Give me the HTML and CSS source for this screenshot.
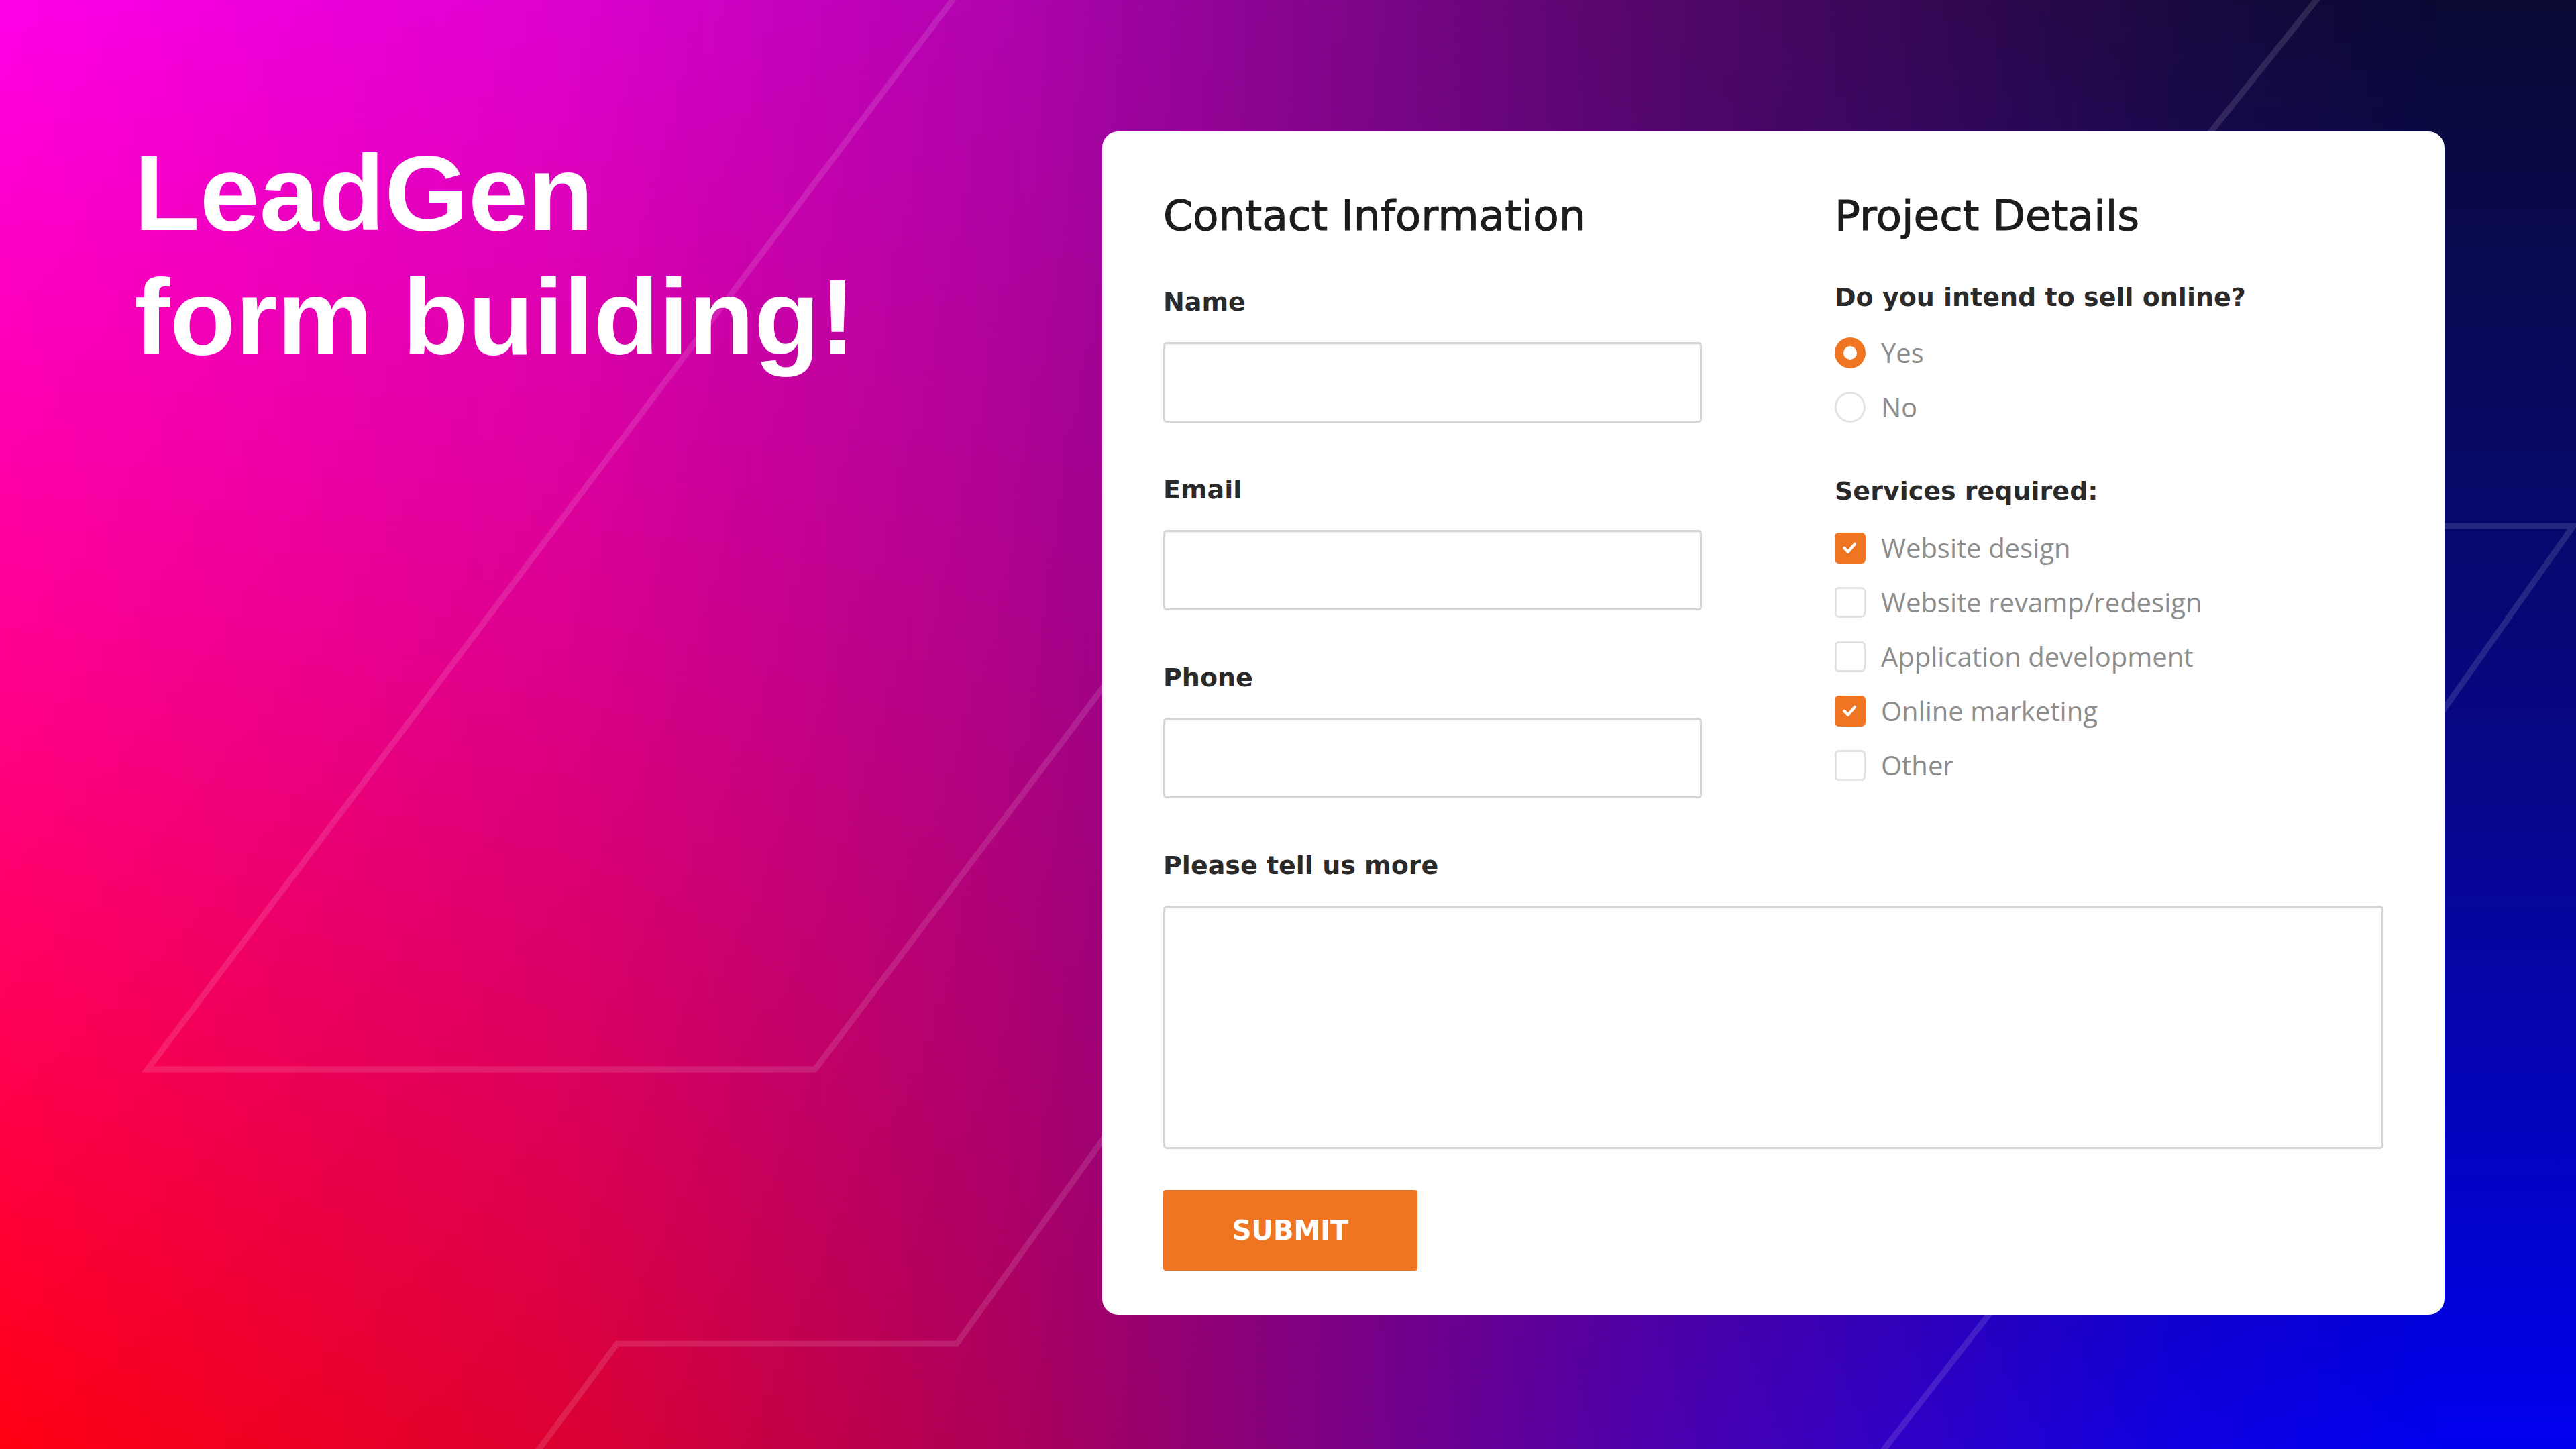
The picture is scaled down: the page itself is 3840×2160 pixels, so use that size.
FILE: index.html
```html
<!DOCTYPE html>
<html lang="en">
<head>
<meta charset="utf-8">
<title>LeadGen form building</title>
<link rel="stylesheet" href="styles.css">
</head>
<body>
<div class="page">
  <svg class="bg-lines" width="3840" height="2160" viewBox="0 0 3840 2160" aria-hidden="true">
    <polyline points="1450,-40 220,1594 1215,1594 1900,686"/>
    <polyline points="3485,-40 3197,320"/>
    <polyline points="3500,784 3836,784 3500,1260"/>
    <polyline points="780,2192 920,2003 1426,2003 1800,1481"/>
    <polyline points="2784,2192 2962,1963 3010,1900"/>
  </svg>

  <h1 class="hero">LeadGen<br>form building!</h1>

  <form class="card">
    <div class="cols">
      <div class="col">
        <h2 class="heading">Contact Information</h2>
        <div class="field">
          <label class="label" for="f-name">Name</label>
          <input class="input" id="f-name" type="text">
        </div>
        <div class="field">
          <label class="label" for="f-email">Email</label>
          <input class="input" id="f-email" type="text">
        </div>
        <div class="field">
          <label class="label" for="f-phone">Phone</label>
          <input class="input" id="f-phone" type="text">
        </div>
      </div>

      <div class="col">
        <h2 class="heading">Project Details</h2>
        <div class="group group-radio">
          <div class="label">Do you intend to sell online?</div>
          <ul class="options">
            <li class="option"><span class="radio on"></span>Yes</li>
            <li class="option"><span class="radio"></span>No</li>
          </ul>
        </div>
        <div class="group group-check">
          <div class="label">Services required:</div>
          <ul class="options">
            <li class="option"><span class="check on"><svg viewBox="0 0 46 46" width="40" height="40"><polyline points="13,23 19.5,29.5 31,16"/></svg></span>Website design</li>
            <li class="option"><span class="check"></span>Website revamp/redesign</li>
            <li class="option"><span class="check"></span>Application development</li>
            <li class="option"><span class="check on"><svg viewBox="0 0 46 46" width="40" height="40"><polyline points="13,23 19.5,29.5 31,16"/></svg></span>Online marketing</li>
            <li class="option"><span class="check"></span>Other</li>
          </ul>
        </div>
      </div>
    </div>

    <div class="field more">
      <label class="label" for="f-more">Please tell us more</label>
      <textarea class="input textarea" id="f-more"></textarea>
    </div>

    <button class="submit" type="button">SUBMIT</button>
  </form>
</div>
</body>
</html>
```

FILE: styles.css
```css
html, body {
  margin: 0;
  padding: 0;
}

body {
  width: 3840px;
  height: 2160px;
  overflow: hidden;
}

.page {
  position: relative;
  width: 3840px;
  height: 2160px;
  box-sizing: border-box;
  display: flex;
  align-items: flex-start;
  padding: 196px 0 0 200px;
  background: linear-gradient(to bottom, #0a0a34 0%, #06078a 55%, #0000f0 100%);
  overflow: hidden;
}

.page::before {
  content: "";
  position: absolute;
  inset: 0;
  background: linear-gradient(to bottom, #ff00e8 0%, #ff0090 45%, #ff0012 100%);
  -webkit-mask-image: linear-gradient(to right, #000 0%, rgba(0,0,0,0.86) 22%, rgba(0,0,0,0.68) 39%, rgba(0,0,0,0.3) 64%, rgba(0,0,0,0.06) 85%, transparent 95%);
  mask-image: linear-gradient(to right, #000 0%, rgba(0,0,0,0.86) 22%, rgba(0,0,0,0.68) 39%, rgba(0,0,0,0.3) 64%, rgba(0,0,0,0.06) 85%, transparent 95%);
  z-index: 0;
}

.bg-lines {
  position: absolute;
  left: 0;
  top: 0;
  z-index: 1;
}

.bg-lines polyline {
  fill: none;
  stroke: rgba(255, 255, 255, 0.12);
  stroke-width: 9;
  stroke-linejoin: miter;
}

.hero {
  position: relative;
  z-index: 2;
  margin: -1px 0 0 0;
  width: 1443px;
  flex: none;
  font-family: "Liberation Sans", Arial, sans-serif;
  font-weight: 700;
  font-size: 160px;
  line-height: 185px;
  color: #ffffff;
}

.card {
  position: relative;
  z-index: 2;
  flex: none;
  width: 2001px;
  box-sizing: border-box;
  margin: 0;
  padding: 88px 91px 66px 91px;
  background: #ffffff;
  border-radius: 24px;
}

.cols {
  display: grid;
  grid-template-columns: 803px 1fr;
  column-gap: 198px;
  align-items: start;
}

.heading {
  margin: 0 0 66px 0;
  font-family: "DejaVu Sans", sans-serif;
  font-weight: 400;
  font-size: 63px;
  line-height: 76px;
  color: #1c1c1c;
  -webkit-text-stroke: 1.1px #1c1c1c;
}

.label {
  display: block;
  font-family: "DejaVu Sans", sans-serif;
  font-weight: 700;
  font-size: 38px;
  line-height: 48px;
  color: #2a2a2a;
}

.input {
  display: block;
  width: 803px;
  height: 120px;
  margin: 36px 0 0 0;
  padding: 0 20px;
  box-sizing: border-box;
  border: 3px solid #d5d5d5;
  border-radius: 5px;
  background: #ffffff;
  box-shadow: inset 0 2px 2px rgba(0, 0, 0, 0.04);
  font-family: "Open Sans", sans-serif;
  font-size: 40px;
  outline: none;
}

.field + .field {
  margin-top: 76px;
}

.group-radio {
  margin-top: -7px;
}

.group + .group {
  margin-top: 61px;
}

.options {
  list-style: none;
  margin: 18px 0 0 0;
  padding: 0;
}

.group-check .options {
  margin-top: 20px;
}

.option {
  display: flex;
  align-items: center;
  gap: 23px;
  height: 81px;
  font-family: "Open Sans", sans-serif;
  font-weight: 400;
  font-size: 40px;
  color: #8d8d8d;
}

.radio {
  flex: none;
  width: 46px;
  height: 46px;
  box-sizing: border-box;
  border-radius: 50%;
  border: 3px solid #e3e3e3;
  background: #ffffff;
}

.radio.on {
  border: 13px solid #f07522;
}

.check {
  flex: none;
  width: 46px;
  height: 46px;
  box-sizing: border-box;
  border-radius: 6px;
  border: 3px solid #e2e2e2;
  background: #ffffff;
  display: flex;
  align-items: center;
  justify-content: center;
}

.check.on {
  background: #f07522;
  border-color: #f07522;
}

.check svg polyline {
  fill: none;
  stroke: #ffffff;
  stroke-width: 5;
  stroke-linecap: round;
  stroke-linejoin: round;
}

.more {
  margin-top: 76px;
}

.textarea {
  width: 100%;
  height: 363px;
  resize: none;
  padding: 20px;
}

.submit {
  display: block;
  margin: 61px 0 0 0;
  width: 379px;
  height: 120px;
  border: 0;
  border-radius: 4px;
  background: #f07522;
  color: #ffffff;
  font-family: "DejaVu Sans", sans-serif;
  font-weight: 700;
  font-size: 40px;
  line-height: 120px;
  padding: 0;
  cursor: pointer;
}
```
